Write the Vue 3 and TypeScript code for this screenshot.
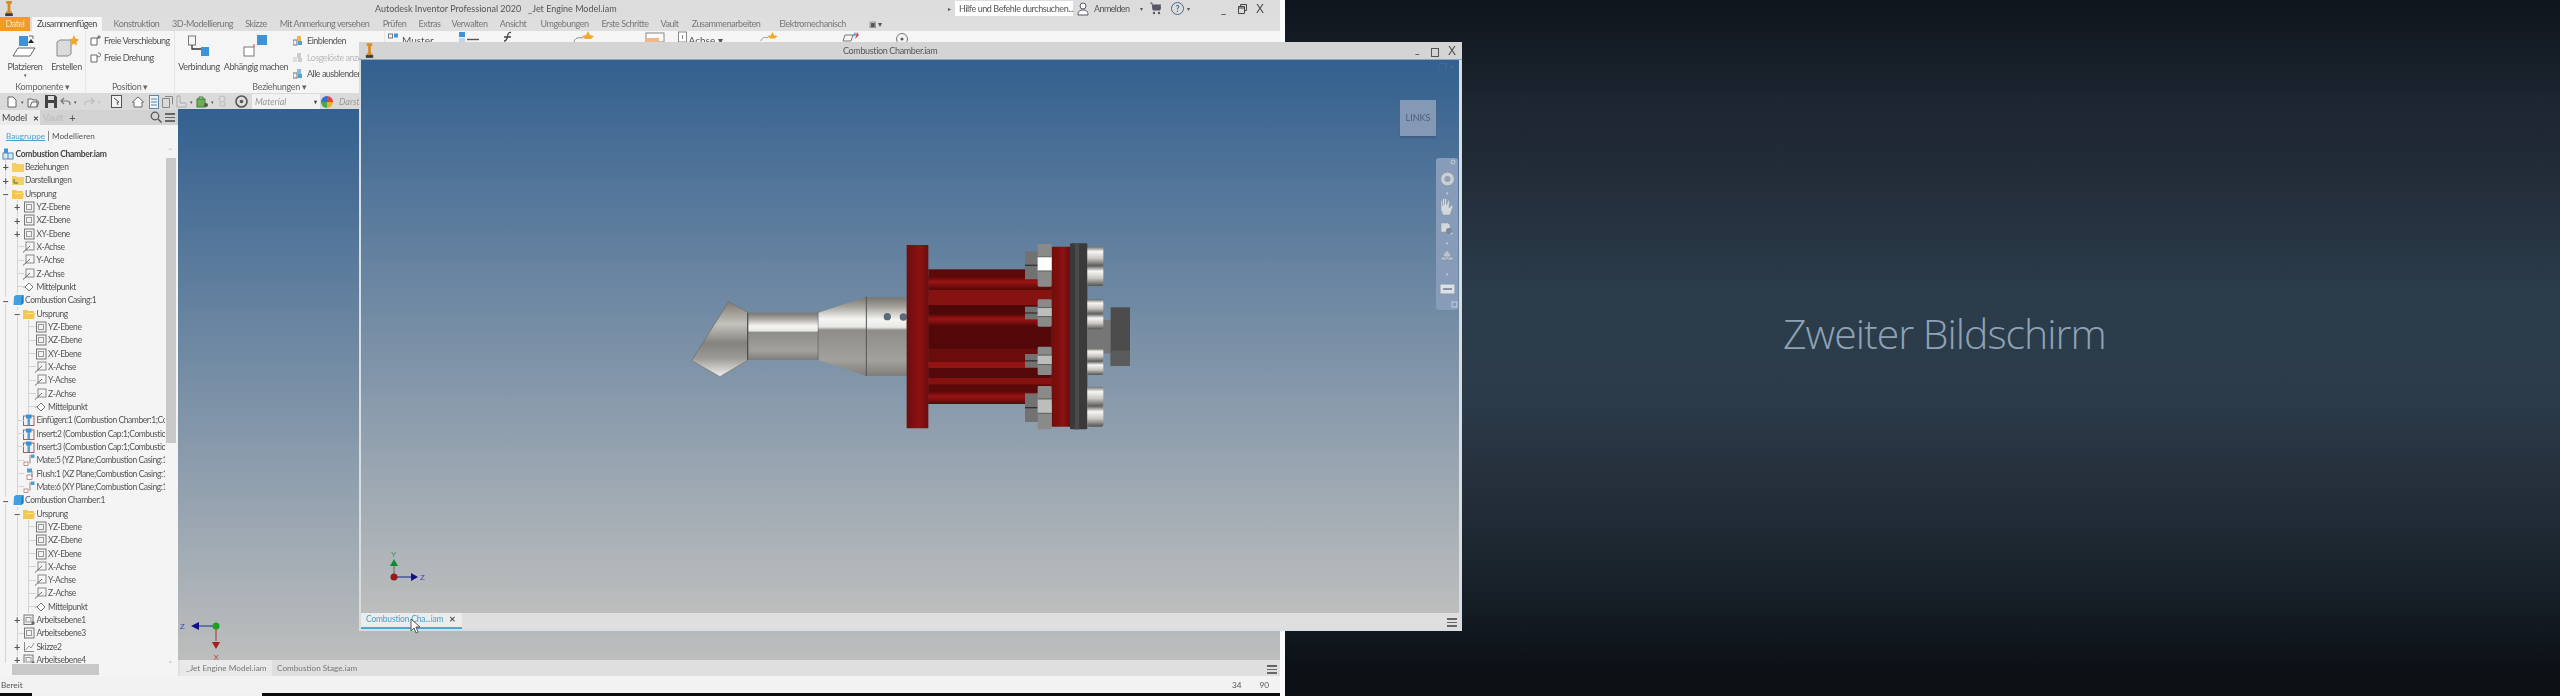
<script setup lang="ts">
type Exp = '+' | '-' | '';
interface Row {
  label: string;
  icon: string;
  level: number;
  exp?: Exp;
  bold?: boolean;
}

const origin = (level: number, expandPlanes: boolean): Row[] => [
  { label: 'Ursprung', icon: 'folder-open', level, exp: '-' },
  ...['YZ-Ebene', 'XZ-Ebene', 'XY-Ebene'].map((label) => ({
    label,
    icon: 'plane',
    level: level + 1,
    exp: (expandPlanes ? '+' : '') as Exp,
  })),
  ...['X-Achse', 'Y-Achse', 'Z-Achse'].map((label) => ({ label, icon: 'axis', level: level + 1 })),
  { label: 'Mittelpunkt', icon: 'point', level: level + 1 },
];

const rows: Row[] = [
  { label: 'Combustion Chamber.iam', icon: 'assembly', level: 0, bold: true },
  { label: 'Beziehungen', icon: 'folder', level: 1, exp: '+' },
  { label: 'Darstellungen', icon: 'folder-view', level: 1, exp: '+' },
  ...origin(1, true),
  { label: 'Combustion Casing:1', icon: 'part', level: 1, exp: '-' },
  ...origin(2, false),
  { label: 'Einfügen:1 (Combustion Chamber:1;Combustion Casing:1)', icon: 'insert', level: 2 },
  { label: 'Insert:2 (Combustion Cap:1;Combustion Casing:1)', icon: 'insert', level: 2 },
  { label: 'Insert:3 (Combustion Cap:1;Combustion Casing:1)', icon: 'insert', level: 2 },
  { label: 'Mate:5 (YZ Plane;Combustion Casing:1)', icon: 'mate', level: 2 },
  { label: 'Flush:1 (XZ Plane;Combustion Casing:1)', icon: 'flush', level: 2 },
  { label: 'Mate:6 (XY Plane;Combustion Casing:1)', icon: 'mate', level: 2 },
  { label: 'Combustion Chamber:1', icon: 'part', level: 1, exp: '-' },
  ...origin(2, false),
  { label: 'Arbeitsebene1', icon: 'workplane', level: 2, exp: '+' },
  { label: 'Arbeitsebene3', icon: 'plane', level: 2 },
  { label: 'Skizze2', icon: 'sketch', level: 2, exp: '+' },
  { label: 'Arbeitsebene4', icon: 'workplane', level: 2, exp: '+' },
];

const tabs = [
  { label: 'Konstruktion', w: 59 },
  { label: '3D-Modellierung', w: 73 },
  { label: 'Skizze', w: 34 },
  { label: 'Mit Anmerkung versehen', w: 103 },
  { label: 'Prüfen', w: 37 },
  { label: 'Extras', w: 33 },
  { label: 'Verwalten', w: 47 },
  { label: 'Ansicht', w: 40 },
  { label: 'Umgebungen', w: 63 },
  { label: 'Erste Schritte', w: 58 },
  { label: 'Vault', w: 31 },
  { label: 'Zusammenarbeiten', w: 82 },
  { label: 'Elektromechanisch', w: 91 },
];

// top edge of the ribbon that still shows above the floating window
const tail = [
  { icon: 'pattern', left: 3, w: 12, text: 'Muster' },
  { icon: 'bluedash', left: 24, w: 22, text: '' },
  { icon: 'ffunc', left: 21, w: 12, text: '' },
  { icon: 'star-line', left: 60, w: 24, text: '' },
  { icon: 'orange-rect', left: 48, w: 20, text: '' },
  { icon: 'small-rect', left: 13, w: 9, text: 'Achse ▾' },
  { icon: 'star-line', left: 37, w: 20, text: '' },
  { icon: 'color-line', left: 62, w: 18, text: '' },
  { icon: 'circle-dot', left: 35, w: 14, text: '' },
];

const nuts = [
  { y: 72, h: 128, d: true },
  { y: 238, h: 82, d: false },
  { y: 380, h: 85, d: false },
  { y: 498, h: 130, d: true },
];
const heads = [
  { y: 80, h: 118 },
  { y: 238, h: 90 },
  { y: 385, h: 80 },
  { y: 500, h: 120 },
];
const stripes = [
  { y: 170, h: 38, c: 'url(#redHi)' },
  { y: 210, h: 45, c: '#861212' },
  { y: 255, h: 28, c: '#4d0808' },
  { y: 283, h: 35, c: 'url(#redHi)' },
  { y: 318, h: 68, c: '#520808' },
  { y: 386, h: 40, c: '#6a0c0c' },
  { y: 426, h: 18, c: '#941313' },
  { y: 444, h: 30, c: '#560909' },
  { y: 474, h: 20, c: '#861111' },
  { y: 494, h: 20, c: '#5a0a0a' },
  { y: 514, h: 38, c: 'url(#redHi)' },
];
</script>

<template>
  <div class="desktop">
    <svg class="defs" width="0" height="0">
      <symbol id="logo" viewBox="0 0 12 18">
        <path d="M3 1h6v3H7.500v8H9v2H3v-2h1.500V4H3z" fill="#d98a22" />
        <rect x="2" y="14" width="8" height="3" fill="#3a3a3a" />
      </symbol>
      <symbol id="folder" viewBox="0 0 12 12">
        <path d="M0 2h4l1 1h7v8H0z" fill="#f6cf62" />
      </symbol>
      <symbol id="folder-open" viewBox="0 0 12 12">
        <path d="M0 2h4l1 1h6v2h1l-1 6H0z" fill="#f4c64e" />
        <path d="M3 5h8l-1 1H3z" fill="#fbe7a6" />
      </symbol>
      <symbol id="folder-view" viewBox="0 0 12 12">
        <path d="M0 2h4l1 1h7v8H0z" fill="#efd06a" />
        <path d="M2 9V5M2 9h4" stroke="#5a6a30" fill="none" />
      </symbol>
      <symbol id="plane" viewBox="0 0 12 12">
        <rect x="1.500" y="1" width="9.500" height="10" fill="#f2f2f2" stroke="#777" />
        <rect x="3.500" y="3.500" width="5" height="5" fill="none" stroke="#999" />
      </symbol>
      <symbol id="workplane" viewBox="0 0 12 12">
        <rect x="1" y="1" width="9" height="9.500" fill="#f2f2f2" stroke="#777" />
        <rect x="3" y="3.500" width="5" height="4.500" fill="none" stroke="#999" />
        <rect x="8.500" y="7.500" width="3" height="3" fill="#666" />
      </symbol>
      <symbol id="axis" viewBox="0 0 12 12">
        <rect x="3" y="1" width="8" height="8" fill="#f6f6f6" stroke="#888" />
        <path d="M0 11.500 7 5" stroke="#666" fill="none" />
      </symbol>
      <symbol id="point" viewBox="0 0 12 12">
        <path d="M6 2 10 6 6 10 2 6z" fill="#fff" stroke="#777" />
        <path d="M0 6h2" stroke="#999" />
      </symbol>
      <symbol id="assembly" viewBox="0 0 12 12">
        <rect x="1" y="5" width="10" height="6" fill="#dbe9f5" stroke="#4c86b8" />
        <rect x="2" y="0.500" width="4" height="4.500" fill="#3d94d8" />
        <path d="M6 5v6" stroke="#4c86b8" />
      </symbol>
      <symbol id="part" viewBox="0 0 12 12">
        <path d="M2 2.500 4 1h7.500v8L9.500 11H1.500z" fill="#3f9fe0" />
        <path d="M9.500 3v8l2-2V1z" fill="#1f7dbd" />
      </symbol>
      <symbol id="insert" viewBox="0 0 12 12">
        <rect x="0.500" y="2" width="10.500" height="9.500" fill="#f1f1f1" stroke="#a06060" />
        <rect x="3" y="0.500" width="5.500" height="4" fill="#3d8fd0" />
        <rect x="4.500" y="4" width="2.500" height="7" fill="#5a9fd3" />
      </symbol>
      <symbol id="mate" viewBox="0 0 12 12">
        <rect x="8" y="0.500" width="3.500" height="3.500" fill="#45a0de" />
        <path d="M7 1v8.500" stroke="#888" />
        <rect x="1" y="8" width="4" height="3.500" fill="#fff" stroke="#b06060" stroke-width="0.700" />
      </symbol>
      <symbol id="flush" viewBox="0 0 12 12">
        <rect x="4" y="0.500" width="5" height="4" fill="#45a0de" />
        <rect x="4" y="7" width="5" height="4.500" fill="#fff" stroke="#b06060" stroke-width="0.700" />
        <path d="M9 3v6" stroke="#888" />
      </symbol>
      <symbol id="sketch" viewBox="0 0 12 12">
        <path d="M1.500 1v9.500H11" stroke="#888" fill="none" />
        <path d="M2.500 9 6 5l2 2 3-5" stroke="#999" fill="none" />
      </symbol>
      <symbol id="pattern" viewBox="0 0 12 11">
        <rect x="0.500" y="3" width="4" height="4" fill="none" stroke="#777" />
        <rect x="6" y="2.500" width="4" height="4" fill="#3d94d8" />
      </symbol>
      <symbol id="bluedash" viewBox="0 0 22 11">
        <rect x="1" y="1" width="6" height="5" fill="#3d94d8" />
        <rect x="1" y="7" width="6" height="4" fill="#bcd6ea" />
        <path d="M9 8.500h12" stroke="#555" stroke-width="1.400" />
      </symbol>
      <symbol id="ffunc" viewBox="0 0 12 11">
        <path d="M10 1.500C7 1 7 3 6.500 5.500S5.500 10 3 10M3 6h7" stroke="#444" stroke-width="1.300" fill="none" />
      </symbol>
      <symbol id="star-line" viewBox="0 0 24 11">
        <path d="M1 11c1-4 4-5 9-4" stroke="#888" fill="none" />
        <path d="M15 0l2 4 4 1-3 3H12L9 5l4-1z" fill="#eeaa33" />
      </symbol>
      <symbol id="orange-rect" viewBox="0 0 20 11">
        <rect x="1" y="2" width="18" height="9" fill="#fbfbfb" stroke="#888" />
        <rect x="1" y="7" width="13" height="4" fill="#eeb88a" />
      </symbol>
      <symbol id="small-rect" viewBox="0 0 9 11">
        <rect x="0.500" y="1" width="8" height="10" fill="#fff" stroke="#888" />
        <path d="M4.500 4v4" stroke="#888" />
      </symbol>
      <symbol id="color-line" viewBox="0 0 18 11">
        <path d="M1 10 3 4h8M1 10h8l2-6" stroke="#777" fill="none" />
        <path d="M10 6l3-5 1 3z" fill="#3d94d8" />
        <path d="M13 8l2-7 2 3z" fill="#d4474b" />
      </symbol>
      <symbol id="circle-dot" viewBox="0 0 14 11">
        <circle cx="7" cy="8" r="5.500" fill="none" stroke="#777" />
        <circle cx="7" cy="8" r="1.500" fill="#555" />
      </symbol>
    </svg>

    <section class="main">
      <header class="titlebar">
        <svg class="logo"><use href="#logo" /></svg>
        <span class="app-title">Autodesk Inventor Professional 2020 &nbsp; _Jet Engine Model.iam</span>
        <div class="title-right">
          <span class="arrow-dot">▸</span>
          <span class="search">Hilfe und Befehle durchsuchen...</span>
          <svg class="user" width="12" height="14" viewBox="0 0 12 14">
            <circle cx="6" cy="4" r="3" fill="#fff" stroke="#556" />
            <path d="M1 13c0-4 2-5 5-5s5 1 5 5z" fill="#fff" stroke="#556" />
          </svg>
          <span class="signin">Anmelden</span>
          <span class="mini">▾</span>
          <svg class="cart" width="11" height="13" viewBox="0 0 11 13">
            <path d="M0 1h2l1 7h7l1-5H3" stroke="#556" fill="none" />
            <rect x="3" y="3" width="7" height="5" fill="#556" />
            <circle cx="4" cy="11" r="1.200" fill="#556" />
            <circle cx="9" cy="11" r="1.200" fill="#556" />
          </svg>
          <span class="help">?</span>
          <span class="mini last">▾</span>
          <span class="wctl min">_</span>
          <svg class="wctl restore" width="9" height="10" viewBox="0 0 9 10">
            <path d="M2.500 2.500v-2h6v6h-2M.5 2.500h6v7h-6zM.5 4h6" stroke="#444" fill="none" />
          </svg>
          <span class="wctl close">X</span>
        </div>
      </header>

      <nav class="tabs">
        <span class="tab file">Datei</span>
        <span class="tab active">Zusammenfügen</span>
        <span v-for="t in tabs" :key="t.label" class="tab" :style="{ width: t.w + 'px' }">{{ t.label }}</span>
        <span class="tab-more">▣ ▾</span>
      </nav>

      <div class="ribbon">
        <div class="panel p-comp">
          <div class="panel-body">
            <div class="big w-place">
              <svg width="26" height="22" viewBox="0 0 26 22">
                <path d="M6 13h17l-5 8H1z" fill="#fff" stroke="#666" />
                <rect x="7" y="1" width="9" height="10" fill="#3d94d8" />
                <path d="M17 1h4v3" stroke="#666" fill="none" />
                <path d="M19 4l3 4h-6z" fill="#222" />
              </svg>
              <span>Platzieren</span>
              <em>▾</em>
            </div>
            <div class="big w-make">
              <svg width="24" height="22" viewBox="0 0 24 22">
                <path d="M2 7l3-2h11v14l-3 2H2z" fill="#dcdcdc" stroke="#888" />
                <path d="M19 0l1.600 3.400 3.400 1-2.500 2.600.5 3.500-3-1.700-3 1.700.5-3.500-2.500-2.600 3.400-1z" fill="#f0a92e" />
              </svg>
              <span>Erstellen</span>
            </div>
          </div>
          <div class="panel-label">Komponente ▾</div>
        </div>

        <div class="panel p-pos">
          <div class="panel-body small-col">
            <div class="small">
              <svg width="11" height="11" viewBox="0 0 11 11"><path d="M1 3h6v7H1zM7 4l2-2M9 0v4M7 2h4" stroke="#666" fill="#fff" /></svg>
              Freie Verschiebung
            </div>
            <div class="small">
              <svg width="11" height="11" viewBox="0 0 11 11"><path d="M1 3h6v7H1zM8 1a2 2 0 1 1-1 3" stroke="#666" fill="#fff" /></svg>
              Freie Drehung
            </div>
          </div>
          <div class="panel-label">Position ▾</div>
        </div>

        <div class="panel p-rel">
          <div class="panel-body">
            <div class="big w-join">
              <svg width="24" height="22" viewBox="0 0 24 22">
                <rect x="1.500" y="1" width="7" height="9" fill="#f4f4f4" stroke="#777" />
                <path d="M5 10v4h9" stroke="#333" stroke-width="1.300" fill="none" />
                <rect x="14" y="12" width="8" height="9" fill="#3d94d8" />
              </svg>
              <span>Verbindung</span>
            </div>
            <div class="big w-ground">
              <svg width="26" height="22" viewBox="0 0 26 22">
                <rect x="14" y="0" width="10" height="10" fill="#3d94d8" />
                <rect x="1" y="12" width="10" height="9" fill="#fff" stroke="#777" />
                <path d="M11 12V9" stroke="#c44" />
              </svg>
              <span>Abhängig machen</span>
            </div>
            <div class="small-col rel-col">
              <div class="small">
                <svg width="11" height="11" viewBox="0 0 11 11"><rect x="0" y="5" width="4" height="5" fill="#eee" stroke="#777" /><rect x="4" y="1" width="4" height="5" fill="#edb84a" /><rect x="5" y="6" width="4" height="4" fill="#4fa0d8" /></svg>
                Einblenden
              </div>
              <div class="small off">
                <svg width="11" height="11" viewBox="0 0 11 11"><rect x="0" y="5" width="4" height="5" fill="#ddd" /><rect x="4" y="1" width="4" height="5" fill="#ccc" /><rect x="5" y="6" width="4" height="4" fill="#ccc" /></svg>
                Losgelöste anzeigen
              </div>
              <div class="small">
                <svg width="11" height="11" viewBox="0 0 11 11"><rect x="0" y="5" width="4" height="5" fill="#eee" stroke="#777" /><rect x="4" y="1" width="4" height="5" fill="#8ab8d8" /><rect x="5" y="6" width="4" height="4" fill="#4fa0d8" /></svg>
                Alle ausblenden
              </div>
            </div>
          </div>
          <div class="panel-label">Beziehungen ▾</div>
        </div>

        <div class="tail">
          <div v-for="(t, i) in tail" :key="i" class="tail-item" :style="{ marginLeft: t.left + 'px' }">
            <svg :width="t.w" height="11"><use :href="'#' + t.icon" /></svg>
            <span v-if="t.text">{{ t.text }}</span>
          </div>
        </div>
      </div>

      <div class="qat">
        <svg class="qi" width="12" height="12" viewBox="0 0 12 12"><path d="M2 1h5l3 3v7H2z" fill="#fff" stroke="#666" /></svg>
        <i class="dd">▾</i>
        <svg class="qi" width="12" height="12" viewBox="0 0 12 12"><path d="M1 3h4l1 1h4v7H1zM3 11l2-5h7l-2 5" fill="#f5f5f5" stroke="#666" /></svg>
        <svg class="qi save" width="12" height="13" viewBox="0 0 12 13"><path d="M0 0h10l2 2v11H0z" fill="#444" /><rect x="3" y="1" width="6" height="4" fill="#ddd" /><rect x="3" y="8" width="6" height="5" fill="#ddd" /></svg>
        <svg class="qi" width="11" height="12" viewBox="0 0 11 12"><path d="M4 2 1 5l3 3M1 5h6a3 3 0 0 1 3 3v1" stroke="#777" fill="none" stroke-width="1.200" /></svg>
        <i class="dd">▾</i>
        <svg class="qi redo" width="11" height="12" viewBox="0 0 11 12"><path d="M7 2l3 3-3 3M10 5H4a3 3 0 0 0-3 3v1" stroke="#bbb" fill="none" stroke-width="1.200" /></svg>
        <i class="dd pale">▾</i>
        <svg class="qi pick" width="11" height="13" viewBox="0 0 11 13"><rect x="0.500" y="0.500" width="10" height="12" fill="#f2f2f2" stroke="#555" /><path d="M3 3l5 4-2 .5L7 10" stroke="#555" fill="none" /></svg>
        <svg class="qi home" width="12" height="12" viewBox="0 0 12 12"><path d="M6 1 0.500 6H2v5h8V6h1.500z" fill="#fff" stroke="#666" /></svg>
        <svg class="qi" width="10" height="14" viewBox="0 0 10 14"><rect x="0.500" y="0.500" width="9" height="13" fill="#eef3f8" stroke="#5a87aa" /><path d="M2 4h6M2 7h6M2 10h6" stroke="#5a87aa" /></svg>
        <svg class="qi" width="11" height="12" viewBox="0 0 11 12"><path d="M.5 2.500h7v9h-7zM3 .5h7.500v8" fill="none" stroke="#888" /></svg>
        <svg class="qi" width="11" height="13" viewBox="0 0 11 13"><path d="M1 1h3v7h6v4H1z" fill="#ddd" stroke="#aaa" /></svg>
        <i class="dd">▾</i>
        <svg class="qi" width="12" height="13" viewBox="0 0 12 13"><rect x="1" y="4" width="8" height="8" fill="#6bb054" stroke="#3f7f30" /><path d="M3 4V2h4v2" stroke="#3f7f30" fill="none" /><circle cx="10" cy="10" r="2" fill="#555" /></svg>
        <i class="dd">▾</i>
        <svg class="qi" width="11" height="13" viewBox="0 0 11 13"><circle cx="5" cy="4" r="3" fill="none" stroke="#bbb" /><path d="M3 7v4h5V7" stroke="#bbb" fill="none" /></svg>
        <svg class="qi gear" width="13" height="13" viewBox="0 0 13 13"><circle cx="6.500" cy="6.500" r="5.500" fill="#dcdcdc" stroke="#555" stroke-width="1.600" /><circle cx="6.500" cy="6.500" r="1.800" fill="#555" /></svg>
        <span class="combo"><em>Material</em><b>▾</b></span>
        <svg class="qi wheel" width="12" height="14" viewBox="0 0 12 14">
          <path d="M6 7V1a6 6 0 0 1 6 6z" fill="#e0453a" />
          <path d="M6 7h6a6 6 0 0 1-6 6z" fill="#e8b02f" />
          <path d="M6 7v6a6 6 0 0 1-6-6z" fill="#4aa84d" />
          <path d="M6 7H0a6 6 0 0 1 6-6z" fill="#3470c4" />
        </svg>
        <em class="dars">Darstellung</em>
      </div>

      <div class="body">
        <aside class="browser">
          <div class="browser-tabs">
            <span class="b-tab on">Model <b>✕</b></span>
            <span class="b-vault">Vault</span>
            <span class="b-plus">+</span>
            <svg class="b-search" width="12" height="12" viewBox="0 0 12 12"><circle cx="5" cy="5" r="3.800" fill="none" stroke="#555" stroke-width="1.200" /><path d="M8 8l3.500 3.500" stroke="#555" stroke-width="1.400" /></svg>
            <span class="burger"><i /><i /><i /></span>
          </div>
          <div class="sub-tabs">
            <span class="link">Baugruppe</span><span class="pipe" /><span>Modellieren</span>
          </div>
          <div class="tree-wrap">
            <div class="tree">
              <div v-for="(r, i) in rows" :key="i" class="row" :class="{ root: r.level === 0, bold: r.bold }">
                <span v-for="s in r.level" :key="s" class="slot" :class="{ tick: s === r.level && !r.exp }">
                  <b v-if="s === r.level && r.exp" class="exp">{{ r.exp === '-' ? '−' : '+' }}</b>
                </span>
                <svg class="ticon" width="12" height="12"><use :href="'#' + r.icon" /></svg>
                <span class="rlabel">{{ r.label }}</span>
              </div>
            </div>
            <div class="vbar">
              <i class="sb-arrow up">⌃</i>
              <i class="thumb" />
              <i class="sb-arrow down">⌄</i>
            </div>
          </div>
          <div class="hbar"><i class="hthumb" /></div>
        </aside>
        <div class="work">
          <div class="viewport" />
          <svg class="triad-main" width="50" height="64" viewBox="0 0 50 64">
            <path d="M38 17H20" stroke="#1a2a90" />
            <path d="M13 17l8-4v8z" fill="#10108a" />
            <text x="2" y="20" class="tx blue">Z</text>
            <path d="M38 20v12" stroke="#a33" />
            <path d="M38 40l-4-7h8z" fill="#aa1a1a" />
            <text x="35.500" y="51" class="tx red">X</text>
            <circle cx="38" cy="17" r="3.500" fill="#1ea01e" />
          </svg>
          <div class="doc-tabs">
            <span class="doc on">_Jet Engine Model.iam</span>
            <span class="doc">Combustion Stage.iam</span>
            <span class="burger doc-burger"><i /><i /><i /></span>
          </div>
        </div>
      </div>

      <footer class="status">
        <span>Bereit</span>
        <span class="nums"><b>34</b><b>90</b></span>
      </footer>
    </section>

    <div class="bottom-strip"><i class="s-black a" /><i class="s-pale" /><i class="s-black b" /><i class="s-white" /></div>

    <section class="float">
      <header class="f-title">
        <svg class="f-logo"><use href="#logo" /></svg>
        <span class="f-name">Combustion Chamber.iam</span>
        <span class="f-ctl">_</span>
        <span class="f-max" />
        <span class="f-x">X</span>
      </header>
      <div class="f-view">
        <div class="mini-ctl">❐ ×</div>
        <svg class="model" width="480" height="230" viewBox="0 0 1440 690">
          <defs>
            <linearGradient id="steel" x1="0" y1="0" x2="0" y2="1">
              <stop offset="0" stop-color="#77746f" />
              <stop offset="0.12" stop-color="#a5a29c" />
              <stop offset="0.28" stop-color="#f5f5f2" />
              <stop offset="0.38" stop-color="#e8e8e5" />
              <stop offset="0.42" stop-color="#8f8d88" />
              <stop offset="0.8" stop-color="#a3a19c" />
              <stop offset="1" stop-color="#807d78" />
            </linearGradient>
            <linearGradient id="tip" x1="0" y1="0" x2="0" y2="1">
              <stop offset="0" stop-color="#807b72" />
              <stop offset="0.3" stop-color="#c4c2bc" />
              <stop offset="0.55" stop-color="#85837e" />
              <stop offset="0.75" stop-color="#9b9994" />
              <stop offset="1" stop-color="#f0f0ee" />
            </linearGradient>
            <linearGradient id="redHi" x1="0" y1="0" x2="0" y2="1">
              <stop offset="0" stop-color="#5a0808" />
              <stop offset="0.4" stop-color="#9c1414" />
              <stop offset="1" stop-color="#560808" />
            </linearGradient>
            <linearGradient id="flange" x1="0" y1="0" x2="1" y2="0">
              <stop offset="0" stop-color="#6f0d0d" />
              <stop offset="0.6" stop-color="#8c1212" />
              <stop offset="1" stop-color="#6a0c0c" />
            </linearGradient>
            <linearGradient id="chrome" x1="0" y1="0" x2="0" y2="1">
              <stop offset="0" stop-color="#6f6c68" />
              <stop offset="0.25" stop-color="#f6f6f4" />
              <stop offset="0.6" stop-color="#c9c7c2" />
              <stop offset="1" stop-color="#55534f" />
            </linearGradient>
          </defs>
          <path d="M176 245 235 278V420L150 470 65 422Z" fill="url(#tip)" stroke="#6b6b68" stroke-width="2" />
          <rect x="235" y="278" width="210" height="142" fill="url(#steel)" />
          <path d="M233 278v142M445 278v142" stroke="#444" stroke-width="3" />
          <path d="M445 278 590 230V468L445 420Z" fill="url(#steel)" />
          <rect x="590" y="232" width="120" height="236" fill="url(#steel)" />
          <path d="M589 230v238" stroke="#555" stroke-width="3" />
          <circle cx="652" cy="290" r="11" fill="#5d6a78" />
          <circle cx="700" cy="291" r="11" fill="#5d6a78" />
          <rect x="775" y="148" width="370" height="404" fill="#5c0909" />
          <rect v-for="(s, i) in stripes" :key="i" x="775" :y="s.y" width="370" :height="s.h" :fill="s.c" />
          <path d="M710 75h65v550h-65z" fill="url(#flange)" />
          <path d="M1145 80h56v540h-56z" fill="url(#flange)" />
          <rect x="1200" y="70" width="52" height="558" rx="4" fill="#3a3a3a" />
          <rect x="1215" y="70" width="12" height="558" fill="#4a4a4a" />
          <rect x="1252" y="300" width="72" height="100" fill="#767676" />
          <rect x="1322" y="262" width="58" height="176" fill="#4c4c4c" />
          <rect x="1322" y="392" width="58" height="46" fill="#5b5b5b" />
          <g v-for="(h, i) in heads" :key="i">
            <rect x="1252" :y="h.y" width="48" :height="h.h / 2" rx="6" fill="url(#chrome)" />
            <rect x="1252" :y="h.y + h.h / 2" width="48" :height="h.h / 2" rx="6" fill="url(#chrome)" />
          </g>
          <g v-for="(n, i) in nuts" :key="i">
            <rect x="1065" :y="n.y + 22" width="40" :height="n.h - 44" fill="#727272" />
            <path :d="`M1065 ${n.y + n.h / 2}h40`" stroke="#333" stroke-width="4" />
            <rect x="1103" :y="n.y" width="42" :height="n.h" rx="4" fill="#8a8a8a" />
            <rect x="1103" :y="n.y + n.h * 0.3" width="42" :height="n.h * 0.33" :fill="i === 0 ? '#fff' : '#bdbdbd'" />
            <path :d="`M1103 ${n.y + n.h * 0.3}h42M1103 ${n.y + n.h * 0.63}h42`" stroke="#3b3b3b" stroke-width="2" />
          </g>
        </svg>

        <svg class="triad-float" width="50" height="54" viewBox="0 0 50 54">
          <text x="10" y="8" class="tx green">Y</text>
          <path d="M13 14V25" stroke="#666" />
          <path d="M13 10l4 7H9z" fill="#108a30" />
          <path d="M16 28h16" stroke="#102090" />
          <path d="M37 28l-7-4v8z" fill="#10108a" />
          <text x="39" y="31" class="tx blue">Z</text>
          <circle cx="13" cy="28" r="3.500" fill="#9a1a1a" />
        </svg>

        <div class="cube"><span>LINKS</span></div>
        <div class="navbar">
          <svg width="22" height="152" viewBox="0 0 22 152">
            <circle cx="17" cy="4" r="2" fill="none" stroke="#c5d0dc" />
            <circle cx="11.500" cy="21" r="7" fill="#c8ced5" stroke="#8896a6" />
            <circle cx="11.500" cy="21" r="3" fill="#93a0ae" />
            <text x="11" y="37" class="nav-dot">▾</text>
            <path d="M5 52V43l1.500-1V48V41l2-1V47V40l2 1V47l2-5 1 1-.5 7 3-3 1 1-3 9H7z" fill="#d4d8dd" stroke="#8896a6" stroke-width="0.500" />
            <path d="M5 65h7l2 2v5l3 3-1.500 2-4-3H5z" fill="#d4d8dd" stroke="#8896a6" stroke-width="0.500" />
            <circle cx="13" cy="73" r="3" fill="#7a8898" />
            <text x="11" y="87" class="nav-dot">▾</text>
            <path d="M11 92l4 5-4 5-4-5zM5 99h12v3H5z" fill="#b9c3ce" stroke="#8896a6" stroke-width="0.700" />
            <text x="11" y="118" class="nav-dot">▾</text>
            <rect x="4" y="126" width="15" height="10" fill="#dce1e6" stroke="#8896a6" />
            <path d="M7 131h9" stroke="#8896a6" stroke-width="2" />
            <rect x="16" y="144" width="5" height="5" fill="none" stroke="#c5d0dc" />
          </svg>
        </div>
      </div>
      <div class="f-tabs">
        <span class="f-tab">Combustion Cha...iam <b>✕</b></span>
        <span class="burger f-burger"><i /><i /><i /></span>
      </div>
      <svg class="cursor" width="12" height="17" viewBox="0 0 12 17">
        <path d="M1 1v12l3-3 2 5 2-1-2-5h4z" fill="#fff" stroke="#555" />
      </svg>
    </section>

    <div class="second">Zweiter Bildschirm</div>
  </div>
</template>

<style>
html,
body {
  margin: 0;
  background: #0c1014;
}
</style>

<style scoped>
.desktop {
  position: relative;
  width: 2560px;
  height: 696px;
  overflow: hidden;
  font-family: Lato, "Liberation Sans", sans-serif;
  font-size: 9px;
  color: #555;
  background: linear-gradient(180deg, #0f151c 0%, #1c2530 14%, #222c38 25%, #2b3c4a 42%, #2b3b4a 58%, #27323f 66%, #1f2a34 76%, #151d25 87%, #0c1116 96%, #0c1014 100%);
}

.defs {
  position: absolute;
}

/* main window */
.main {
  position: absolute;
  left: 0;
  top: 0;
  width: 1280px;
  height: 693px;
  border-right: 5px solid #fbfbfb;
  display: flex;
  flex-direction: column;
  background: #f0f0f0;
  filter: blur(0.5px);
}

.titlebar {
  height: 17px;
  flex: none;
  position: relative;
  background: #dcdcdc;
  display: flex;
  align-items: center;
}

.logo {
  position: absolute;
  left: 3px;
  top: 0;
  width: 12px;
  height: 17px;
}

.app-title {
  margin-left: 375px;
  color: #555;
  white-space: nowrap;
}

.title-right {
  position: absolute;
  left: 948px;
  top: 0;
  height: 17px;
  display: flex;
  align-items: center;
  color: #555;
  white-space: nowrap;
}

.arrow-dot {
  width: 7px;
  font-size: 6px;
}

.search {
  width: 118px;
  height: 15px;
  line-height: 15px;
  padding-left: 4px;
  box-sizing: border-box;
  background: #fff;
  letter-spacing: -0.42px;
}

.user {
  margin: 0 5px 0 4px;
}

.signin {
  width: 46px;
  letter-spacing: -0.6px;
}

.mini {
  font-size: 6px;
  width: 10px;
}

.cart {
  margin-right: 10px;
}

.help {
  width: 11px;
  height: 11px;
  border: 1px solid #4a6a8a;
  border-radius: 50%;
  color: #4a6a8a;
  text-align: center;
  line-height: 11px;
  font-weight: 700;
  margin-right: 3px;
}

.mini.last {
  margin-right: 24px;
}

.wctl.min {
  width: 17px;
  font-size: 11px;
  font-weight: 700;
  line-height: 12px;
}

.wctl.restore {
  margin-right: 9px;
}

.wctl.close {
  font-size: 12px;
  font-family: "Liberation Sans", sans-serif;
  color: #444;
}

.tabs {
  height: 14px;
  flex: none;
  display: flex;
  align-items: center;
  background: #dedede;
  white-space: nowrap;
  color: #777;
  letter-spacing: -0.45px;
}

.tab {
  flex: none;
  text-align: center;
  line-height: 14px;
}

.tab.file {
  width: 30px;
  background: #f39a1f;
  color: #fbe3bd;
}

.tab.active {
  width: 70px;
  margin-left: 2px;
  margin-right: 5px;
  background: #f6f6f6;
  color: #444;
}

.tab-more {
  margin-left: 11px;
  color: #555;
  font-size: 8px;
}

.ribbon {
  height: 62px;
  flex: none;
  display: flex;
  background: #f5f5f5;
  color: #555;
  white-space: nowrap;
}

.panel {
  flex: none;
  display: flex;
  flex-direction: column;
  box-sizing: border-box;
  border-right: 1px solid #e6e6e6;
}

.p-comp {
  width: 86px;
}

.p-pos {
  width: 89px;
}

.p-rel {
  width: 210px;
}

.panel-body {
  height: 49px;
  display: flex;
}

.panel-label {
  text-align: center;
  height: 13px;
  line-height: 13px;
  color: #666;
  letter-spacing: -0.3px;
}

.big {
  flex: none;
  display: flex;
  flex-direction: column;
  align-items: center;
  padding-top: 4px;
  box-sizing: border-box;
  position: relative;
}

.big span {
  margin-top: 4px;
  line-height: 12px;
  letter-spacing: -0.4px;
}

.big em {
  font-style: normal;
  font-size: 5px;
  line-height: 5px;
  color: #444;
}

.w-place {
  width: 50px;
}

.w-make {
  width: 33px;
}

.w-join {
  width: 48px;
}

.w-ground {
  width: 66px;
}

.small-col {
  flex-direction: column;
  display: flex;
  padding-top: 4px;
  gap: 5.500px;
  padding-left: 4px;
}

.rel-col {
  padding-left: 4px;
}

.small {
  display: flex;
  align-items: center;
  gap: 3px;
  height: 11px;
  line-height: 11px;
  letter-spacing: -0.5px;
}

.small.off {
  color: #bbb;
}

.tail {
  display: flex;
  height: 11px;
  overflow: hidden;
  align-items: flex-start;
}

.tail-item {
  flex: none;
  display: flex;
  gap: 2px;
  line-height: 19px;
  font-size: 10px;
}

.qat {
  height: 17px;
  flex: none;
  background: #dadada;
  display: flex;
  align-items: center;
  padding-left: 6px;
  white-space: nowrap;
  overflow: hidden;
}

.qi {
  flex: none;
  margin-right: 3px;
}

.dd {
  font-style: normal;
  font-size: 5px;
  color: #555;
  margin-right: 3px;
}

.dd.pale {
  color: #bbb;
}

.save {
  margin-left: 3px;
}

.redo {
  margin-left: 4px;
}

.pick {
  margin-left: 7px;
  margin-right: 10px;
}

.home {
  margin-right: 5px;
}

.gear {
  margin: 0 4px;
}

.combo {
  width: 68px;
  height: 15px;
  line-height: 15px;
  background: #f2f2f2;
  padding-left: 3px;
  box-sizing: border-box;
  display: flex;
  justify-content: space-between;
  padding-right: 3px;
  margin-right: 1px;
}

.combo em,
.dars {
  color: #999;
  font-style: italic;
}

.combo b {
  font-size: 6px;
  color: #444;
}

.wheel {
  margin-right: 6px;
}

.body {
  flex: 1;
  min-height: 0;
  display: flex;
}

.browser {
  width: 178px;
  flex: none;
  display: flex;
  flex-direction: column;
  background: #f4f4f4;
}

.browser-tabs {
  height: 15px;
  flex: none;
  position: relative;
  display: flex;
  align-items: center;
  background: #d2d2d2;
}

.b-tab {
  width: 40px;
  height: 15px;
  line-height: 15px;
  box-sizing: border-box;
  padding-left: 2px;
  background: #ebebeb;
  color: #444;
}

.b-tab b {
  font-size: 7px;
  margin-left: 3px;
}

.b-vault {
  margin-left: 3px;
  color: #bbb;
}

.b-plus {
  margin-left: 6px;
  font-size: 11px;
  color: #555;
}

.b-search {
  position: absolute;
  left: 150px;
  top: 1px;
}

.burger {
  display: flex;
  flex-direction: column;
  gap: 2px;
  width: 10px;
}

.burger i {
  display: block;
  height: 1.500px;
  background: #666;
}

.browser-tabs .burger {
  position: absolute;
  left: 165px;
  top: 3px;
}

.sub-tabs {
  height: 22px;
  flex: none;
  display: flex;
  align-items: center;
  padding-left: 6px;
  color: #555;
  font-size: 8.2px;
}

.link {
  color: #4a9fc8;
  text-decoration: underline;
  width: 42px;
}

.pipe {
  width: 1px;
  height: 10px;
  background: #888;
  margin-right: 3px;
}

.tree-wrap {
  flex: 1;
  min-height: 0;
  display: flex;
}

.tree {
  width: 165px;
  flex: none;
  overflow: hidden;
}

.row {
  height: 13.340px;
  display: flex;
  align-items: center;
  white-space: nowrap;
  color: #555;
  font-size: 8.5px;
  letter-spacing: -0.42px;
}

.row.root {
  padding-left: 2px;
}

.row.bold .rlabel {
  font-weight: 700;
  color: #444;
  letter-spacing: -0.3px;
}

.slot {
  flex: none;
  position: relative;
  width: 11.500px;
  height: 100%;
}

.slot::before {
  content: "";
  position: absolute;
  left: 5px;
  top: 0;
  bottom: 0;
  width: 1px;
  background: #d4d4d4;
}

.slot.tick::after {
  content: "";
  position: absolute;
  left: 5px;
  right: -1px;
  top: 6px;
  height: 1px;
  background: #d4d4d4;
}

.exp {
  position: absolute;
  left: 0;
  top: 3px;
  width: 11px;
  height: 7px;
  line-height: 7px;
  text-align: center;
  background: #f4f4f4;
  color: #555;
  font-size: 11px;
  font-weight: 700;
}

.ticon {
  flex: none;
  margin-right: 1.500px;
}

.vbar {
  position: relative;
  width: 13px;
  flex: none;
}

.vbar .thumb {
  position: absolute;
  left: 1px;
  right: 2px;
  top: 11px;
  height: 285px;
  background: #c8c8c8;
}

.sb-arrow {
  position: absolute;
  left: 2px;
  font-size: 8px;
  font-style: normal;
  color: #bbb;
}

.sb-arrow.up {
  top: -1px;
}

.sb-arrow.down {
  bottom: 0;
}

.hbar {
  height: 13px;
  flex: none;
  margin-top: -2px;
  position: relative;
  background: #f4f4f4;
}

.hthumb {
  position: absolute;
  left: 12px;
  width: 87px;
  top: 1px;
  height: 11px;
  background: #c8c8c8;
}

.work {
  flex: 1;
  position: relative;
  display: flex;
  flex-direction: column;
}

.viewport {
  flex: 1;
  margin-top: -1px;
  background: linear-gradient(180deg, #33608f 0%, #bdbebd 100%);
}

.triad-main {
  position: absolute;
  left: 0;
  top: 499px;
}

.tx {
  font-size: 8px;
  font-family: "Liberation Sans", sans-serif;
}

.tx.blue {
  fill: #3a3ac0;
}

.tx.red {
  fill: #c23030;
}

.tx.green {
  fill: #2c9c4c;
}

.doc-tabs {
  height: 16px;
  flex: none;
  display: flex;
  align-items: center;
  background: #dfdfdf;
  position: relative;
  padding-left: 2px;
  color: #777;
  font-size: 8.2px;
}

.doc {
  height: 16px;
  line-height: 16px;
  padding: 0 5px;
}

.doc.on {
  background: #e9e9e9;
  width: 92px;
  box-sizing: border-box;
  padding: 0 0 0 6px;
}

.doc-burger {
  position: absolute;
  left: 1089px;
  top: 5px;
}

.status {
  height: 17px;
  flex: none;
  background: #f2f2f2;
  display: flex;
  align-items: center;
  justify-content: space-between;
  padding-left: 1px;
  color: #555;
  font-size: 8.200px;
}

.nums {
  display: flex;
  gap: 18px;
  margin-right: 11px;
}

.nums b {
  font-weight: 400;
}

.bottom-strip {
  position: absolute;
  left: 0;
  top: 693px;
  width: 1285px;
  height: 3px;
  display: flex;
}

.s-black {
  display: block;
  background: #0a0a0a;
}

.s-black.a {
  width: 32px;
}

.s-black.b {
  flex: 1;
}

.s-pale {
  width: 230px;
  background: #f0f0f0;
}

.s-white {
  width: 5px;
  background: #fbfbfb;
}

/* floating document window */
.float {
  position: absolute;
  left: 359px;
  top: 42px;
  width: 1103px;
  height: 589px;
  box-sizing: border-box;
  border: solid #d8dde2;
  border-width: 0 3px 2px 2px;
  border-top-right-radius: 4px;
  display: flex;
  flex-direction: column;
  background: #d8d8d8;
  filter: blur(0.5px);
}

.f-title {
  height: 18px;
  flex: none;
  position: relative;
  display: flex;
  align-items: center;
  background: #d4d4d4;
  border-bottom: 1px solid #8ea6bd;
  box-sizing: border-box;
  margin: 0 -3px 0 -2px;
  color: #555;
}

.f-logo {
  position: absolute;
  left: 5px;
  top: 0;
  width: 11px;
  height: 17px;
}

.f-name {
  position: absolute;
  left: 484px;
  white-space: nowrap;
  letter-spacing: -0.35px;
}

.f-ctl,
.f-max,
.f-x {
  position: absolute;
  color: #444;
}

.f-ctl {
  left: 1056px;
  top: 1px;
  font-weight: 700;
  font-size: 10px;
}

.f-max {
  left: 1072px;
  top: 6px;
  width: 6px;
  height: 7px;
  border: 1px solid #555;
}

.f-x {
  left: 1089px;
  top: 2px;
  font-size: 12px;
  font-family: "Liberation Sans", sans-serif;
}

.f-view {
  flex: 1;
  position: relative;
  overflow: hidden;
  background: linear-gradient(180deg, #33608f 0%, #bdbebd 100%);
}

.mini-ctl {
  position: absolute;
  right: 4px;
  top: 1px;
  color: #4a6f99;
  font-size: 9px;
}

.model {
  position: absolute;
  left: 309px;
  top: 160px;
}

.triad-float {
  position: absolute;
  left: 20px;
  top: 489px;
}

.cube {
  position: absolute;
  left: 1039px;
  top: 40px;
  width: 36px;
  height: 36px;
  background: #8399b6;
  box-shadow: 0 2px 1px #3f5f85;
  text-align: center;
  line-height: 36px;
  color: #4e607c;
  font-size: 9px;
}

.navbar {
  position: absolute;
  left: 1075px;
  top: 98px;
  width: 22px;
  height: 152px;
  border-radius: 3px;
  background: #869cb9;
}

.nav-dot {
  font-size: 5px;
  fill: #c5d0dc;
  text-anchor: middle;
}

.f-tabs {
  height: 16px;
  flex: none;
  position: relative;
  display: flex;
  background: #dfdfdf;
}

.f-tab {
  width: 101px;
  height: 16px;
  box-sizing: border-box;
  padding-left: 5px;
  line-height: 13px;
  background: #ececec;
  border-bottom: 2px solid #49a9d0;
  color: #4a9fc8;
  white-space: nowrap;
  font-size: 8.5px;
  letter-spacing: -0.2px;
}

.f-tab b {
  color: #555;
  font-size: 8px;
  margin-left: 4px;
}

.f-burger {
  position: absolute;
  left: 1086px;
  top: 5px;
}

.cursor {
  position: absolute;
  left: 49px;
  top: 576px;
}

.second {
  position: absolute;
  left: 1783px;
  top: 307px;
  font-family: "Open Sans", Lato, sans-serif;
  font-weight: 300;
  font-size: 41px;
  line-height: 52px;
  letter-spacing: -1px;
  color: #8ea2b6;
  white-space: nowrap;
}
</style>
